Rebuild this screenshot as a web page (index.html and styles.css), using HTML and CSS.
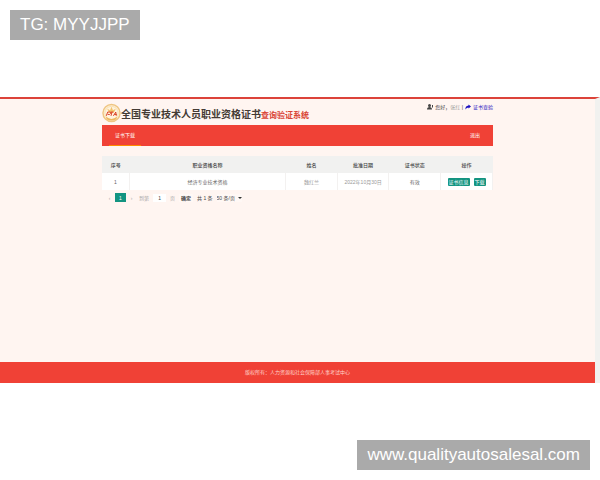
FILE: index.html
```
<!DOCTYPE html>
<html>

<head>
    <title>全国专业技术人员职业资格证书查询验证系统</title>
    <meta charset="UTF-8">
    <link rel="stylesheet" href="styles.css">
</head>

<body>
    <div class="tag tag-top">TG: MYYJJPP</div>

    <div class="page">
        <div class="header">
            <svg class="logo" viewBox="0 0 40 40">
                <circle cx="20" cy="20" r="18" fill="#fff0d4" stroke="#efc583" stroke-width="3"/>
                <circle cx="20" cy="20" r="14" fill="#fff3df" stroke="#f7dfb4" stroke-width="2"/>
                <path d="M11 11l6 3 3-7 3 7 6-3-4 8H15z" fill="#f2c36b"/>
                <path d="M8 28q12 9 24 0l-2 5q-10 6-20 0z" fill="#edb75f"/>
                <path d="M9 26l3-8h4q3 0 2 3t-6 2M18 18h6M21 18l-2 8M24 26l5-8 1 8M26 23h5" fill="none" stroke="#d83a20" stroke-width="2"/>
            </svg>
            <h1>全国专业技术人员职业资格证书<span>查询验证系统</span></h1>
            <div class="user">
                <svg viewBox="0 0 12 12"><circle cx="5" cy="3" r="3" fill="#444"/><path d="M0 11q0-5 5-5t5 5zM10 2h2v5h-2z" fill="#444"/></svg>
                <span>您好，<span class="masked">张红</span> |</span>
                <a href="#">
                    <svg viewBox="0 0 12 12"><path d="M7 1l5 4-5 4V7Q3 7 1 11 0 4 7 3z" fill="#1a0fc0"/></svg>
                    证书查验
                </a>
            </div>
        </div>

        <div class="nav">
            <a class="active" href="#">证书下载</a>
            <a href="#">退出</a>
        </div>

        <div class="content">
            <table>
                <thead>
                    <tr>
                        <th class="col-no">序号</th>
                        <th class="col-name">职业资格名称</th>
                        <th>姓名</th>
                        <th>批准日期</th>
                        <th>证书状态</th>
                        <th>操作</th>
                    </tr>
                </thead>
                <tbody>
                    <tr>
                        <td>1</td>
                        <td>经济专业技术资格</td>
                        <td class="masked">魏红兰</td>
                        <td class="masked">2022年10月30日</td>
                        <td>有效</td>
                        <td class="actions"><button>证书信息</button><button>下载</button></td>
                    </tr>
                </tbody>
            </table>

            <div class="pager">
                <button class="arrow" aria-label="上一页">‹</button>
                <button class="current">1</button>
                <button class="arrow" aria-label="下一页">›</button>
                <label for="page">到第</label>
                <input type="text" id="page" value="1">
                <span class="unit">页</span>
                <button class="confirm">确定</button>
                <span>共 1 条</span>
                <div class="limit">
                    <select aria-label="每页条数">
                        <option>50 条/页</option>
                    </select>
                </div>
            </div>
        </div>

        <div class="footer">版权所有：人力资源和社会保障部人事考试中心</div>
    </div>

    <div class="tag tag-bottom">www.qualityautosalesal.com</div>
</body>

</html>
```

FILE: styles.css
```
* {
    margin: 0;
    padding: 0;
    box-sizing: border-box;
}

body {
    display: flex;
    flex-direction: column;
    justify-content: space-between;
    min-height: 100vh;
    padding: 10px 0;
    background: #fff;
    color: #444;
    font-family: "Liberation Sans", "Noto Sans CJK SC", sans-serif;
    font-size: 5px;
    line-height: 8px;
}

button,
input,
select {
    font: inherit;
    color: inherit;
    border: none;
    background: none;
}

a {
    text-decoration: none;
}

.tag {
    margin: 0 10px;
    padding: 0 10px;
    background: #aaa;
    color: #fff;
    font-size: 17px;
    line-height: 30px;
}

.tag-top {
    align-self: flex-start;
}

.tag-bottom {
    align-self: flex-end;
}

.page {
    display: flex;
    flex-direction: column;
    min-height: 286px;
    background: #fff5f1;
    border-top: 2px solid #dc4339;
    border-right: 5px solid #f1f1ef;
}

.header {
    display: flex;
    align-items: flex-start;
    height: 26px;
    margin: 0 102px;
    padding-top: 4px;
}

.logo {
    width: 19px;
    height: 20px;
}

.header h1 {
    flex: 1;
    color: #443b35;
    font-size: 10px;
    font-weight: 700;
    line-height: 24px;
    white-space: nowrap;
}

.header h1 span {
    color: #d94336;
    font-size: 8px;
}

.user,
.user a {
    display: flex;
    align-items: center;
    gap: 2px;
    white-space: nowrap;
}

.user svg {
    width: 6px;
    height: 6px;
}

.user a {
    color: #1a0fc0;
}

.masked {
    color: #999;
}

.nav {
    display: flex;
    justify-content: space-between;
    margin: 0 102px 10px;
    padding: 0 13px;
    background: #f04136;
    line-height: 20px;
}

.nav a {
    color: #fff;
    border-bottom: 1px solid transparent;
}

.nav .active {
    margin-left: -6px;
    padding: 0 6px;
    border-bottom-color: #ff8c00;
}

.content {
    flex: 1;
    margin: 0 102px;
}

table {
    width: 100%;
    table-layout: fixed;
    border-collapse: collapse;
    background: #fff;
    text-align: center;
}

.col-no {
    width: 7%;
}

.col-name {
    width: 40%;
}

th {
    height: 17px;
    background: #f1f1f0;
    font-weight: 500;
}

td {
    height: 17px;
    border-right: 1px solid #f3f1f0;
    color: #666;
}

td.masked {
    color: #999;
}

.actions button {
    margin: 0 2px;
    padding: 0 1px;
    border-radius: 1px;
    background: #139481;
    color: #fff;
}

.pager {
    display: flex;
    align-items: center;
    gap: 4px;
    margin-top: 3px;
    padding-left: 6px;
}

.pager .arrow,
.pager label,
.unit {
    color: #aaa;
}

.pager .arrow {
    width: 3px;
}

.pager .current {
    width: 11px;
    height: 9px;
    background: #139481;
    color: #fff;
}

.pager label {
    margin-left: 2px;
}

.pager input {
    width: 13px;
    height: 8px;
    background: #fff;
    text-align: center;
}

.confirm {
    width: 14px;
    background: #fff8f5;
    font-weight: 700;
}

.limit {
    display: flex;
    align-items: center;
    gap: 2px;
    background: #fff8f5;
}

.limit select {
    appearance: none;
}

.limit::after {
    content: "";
    border: 2px solid transparent;
    border-top-color: #333;
    border-bottom-width: 0;
}

.footer {
    background: #f04136;
    color: #ffd2c9;
    line-height: 21px;
    text-align: center;
}
```
